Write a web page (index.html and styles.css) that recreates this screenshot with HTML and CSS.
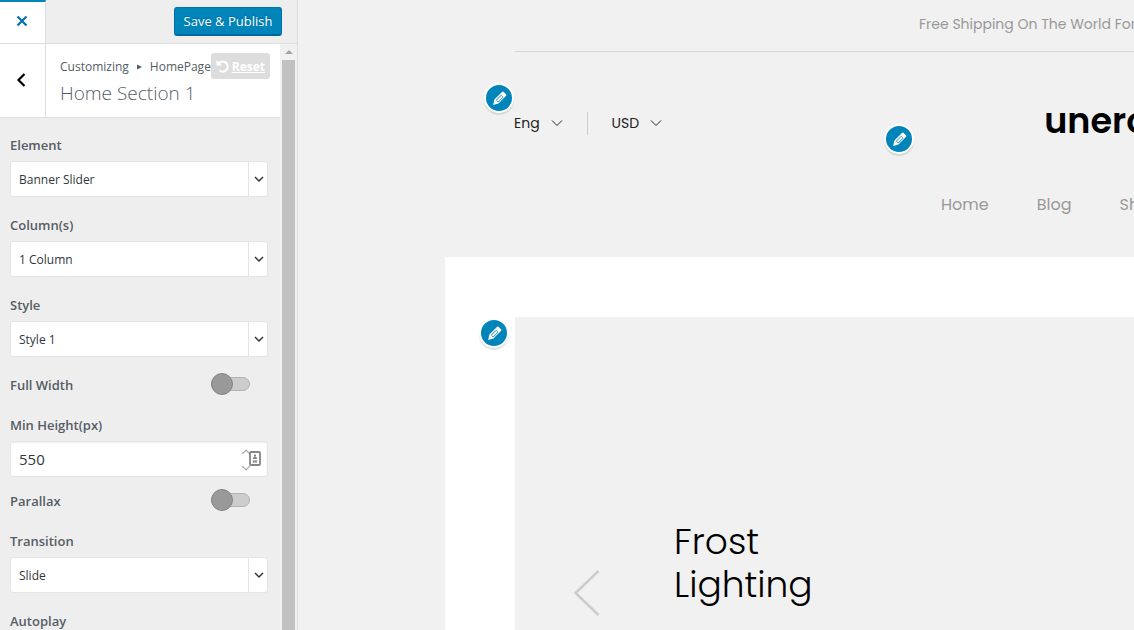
FILE: index.html
```html
<!DOCTYPE html>
<html lang="en">
<head>
<meta charset="utf-8">
<title>Customize: Home Section 1</title>
<link rel="stylesheet" href="styles.css">
</head>
<body>
<svg class="symbols" aria-hidden="true">
  <symbol id="chevron" viewBox="0 0 12 12"><path d="M2 4l4 4 4-4" fill="none" stroke="currentColor" stroke-width="1.5"/></symbol>
  <symbol id="thin-chevron" viewBox="0 0 12 12"><path d="M1 3.500l5 5 5-5" fill="none" stroke="currentColor" stroke-width="1"/></symbol>
  <symbol id="pencil" viewBox="0 0 20 20"><path d="M2.500 17.500L4 11.300L13.200 2.100Q14 1.500 14.700 2.200L17.800 5.300Q18.400 6 17.800 6.700L8.700 16Z" fill="currentColor"/><path d="M6.200 12L12 6.200M8.400 14.200L14.200 8.400" stroke="#0085ba" stroke-width="1.100" fill="none"/><path d="M6.200 12l2.200 2.200" stroke="#0085ba" stroke-width=".8"/><path d="M12 6.200l2.200 2.200" stroke="#0085ba" stroke-width=".8"/></symbol>
</svg>
<aside class="sidebar">
  <header class="topbar">
    <button class="close" aria-label="Close"><svg viewBox="0 0 12 12"><path d="M1.500 1.500l9 9M10.500 1.500l-9 9" stroke="currentColor" stroke-width="2.200"/></svg></button>
    <button class="save">Save &amp; Publish</button>
  </header>
  <div class="scroller">
    <div class="panel">
      <div class="section-head">
        <button class="back" aria-label="Back"><svg viewBox="0 0 10 14"><path d="M8.500 1L2.500 7l6 6" fill="none" stroke="currentColor" stroke-width="2.200"/></svg></button>
        <div class="section-title">
          <div class="crumbs"><span>Customizing</span><svg viewBox="0 0 5 6"><path d="M0 0.500L5 3 0 5.500z" fill="currentColor"/></svg><span>HomePage</span></div>
          <h1>Home Section 1</h1>
          <a class="reset" href="#"><svg viewBox="0 0 13 13"><path d="M3 3.200A5 5 0 1 1 3.500 10.500" fill="none" stroke="currentColor" stroke-width="2.200"/><path d="M.5 0v5.500H6z" fill="currentColor"/></svg>Reset</a>
        </div>
      </div>
      <form class="controls">
        <div class="field">
          <label for="element">Element</label>
          <div class="select"><select id="element"><option>Banner Slider</option></select><svg><use href="#chevron"/></svg></div>
        </div>
        <div class="field">
          <label for="columns">Column(s)</label>
          <div class="select"><select id="columns"><option>1 Column</option></select><svg><use href="#chevron"/></svg></div>
        </div>
        <div class="field">
          <label for="style">Style</label>
          <div class="select"><select id="style"><option>Style 1</option></select><svg><use href="#chevron"/></svg></div>
        </div>
        <div class="toggle-row"><label for="full">Full Width</label><input class="toggle" id="full" type="checkbox"></div>
        <div class="field number-field">
          <label for="height">Min Height(px)</label>
          <div class="number"><input id="height" type="number" value="550">
            <svg viewBox="0 0 22 24"><path d="M2 6l4-4 4 4M2 18l4 4 4-4" fill="none" stroke="#aaa" stroke-width="1.200"/><rect x="10" y="4" width="10" height="13" rx="1" fill="#fff" stroke="#858585" stroke-width="1.800"/><path d="M15 6.500v2" stroke="#858585" stroke-width="2"/><path d="M12.800 11a2.200 2.500 0 0 1 4.400 0z" fill="#858585"/><path d="M12.800 13.500h4.400" stroke="#999" stroke-width="2.500"/></svg>
          </div>
        </div>
        <div class="toggle-row"><label for="parallax">Parallax</label><input class="toggle" id="parallax" type="checkbox"></div>
        <div class="field">
          <label for="transition">Transition</label>
          <div class="select"><select id="transition"><option>Slide</option></select><svg><use href="#chevron"/></svg></div>
        </div>
        <div class="field">
          <label for="autoplay">Autoplay</label>
          <div class="number"><input id="autoplay" type="number"></div>
        </div>
      </form>
    </div>
    <div class="scrollbar"><svg viewBox="0 0 8 4"><path d="M0 4l4-4 4 4z" fill="#a3a3a3"/></svg><div class="thumb"></div></div>
  </div>
</aside>
<main class="preview">
  <div class="promo">Free Shipping On The World For</div>
  <header class="site-header">
    <div class="brand-row">
      <button class="menu">Eng<svg><use href="#thin-chevron"/></svg></button>
      <span class="divider"></span>
      <button class="menu">USD<svg><use href="#thin-chevron"/></svg></button>
      <a class="logo" href="#">unero</a>
    </div>
    <nav class="site-nav"><a href="#">Home</a><a href="#">Blog</a><a href="#">Shop</a></nav>
  </header>
  <section class="content">
    <div class="banner">
      <button class="prev" aria-label="Previous"><svg viewBox="0 0 26 46"><path d="M24.500 1L1.500 23l23 22" fill="none" stroke="currentColor" stroke-width="2.500"/></svg></button>
      <h2>Frost<br>Lighting</h2>
    </div>
  </section>
  <button class="edit edit-menus" aria-label="Edit language menu"><svg><use href="#pencil"/></svg></button>
  <button class="edit edit-nav" aria-label="Edit navigation"><svg><use href="#pencil"/></svg></button>
  <button class="edit edit-banner" aria-label="Edit banner"><svg><use href="#pencil"/></svg></button>
</main>
</body>
</html>
```

FILE: styles.css
```css
*, *::before, *::after { box-sizing: border-box; }
body {
  margin: 0;
  height: 100vh;
  display: flex;
  overflow: hidden;
  background: #f1f1f1;
  font-family: "Segoe UI", "Open Sans", sans-serif;
}
button { border: 0; padding: 0; background: none; font: inherit; cursor: pointer; }
svg { display: block; flex: none; }
a { color: inherit; text-decoration: none; }
.symbols { position: absolute; width: 0; height: 0; }

.sidebar {
  width: 298px;
  flex: none;
  display: flex;
  flex-direction: column;
  background: #eee;
  border-right: 1px solid #ddd;
  color: #555d66;
}
.topbar {
  flex: none;
  height: 44px;
  display: flex;
  justify-content: space-between;
  align-items: center;
  padding-right: 15px;
  border-bottom: 1px solid #ddd;
}
.close {
  width: 46px;
  align-self: stretch;
  display: grid;
  place-items: center;
  padding: 0 2px 3px 0;
  background: #fff;
  border-top: 2px solid #0085ba;
  border-right: 1px solid #ddd;
  color: #0073aa;
}
.close svg { width: 12px; height: 12px; }
.save {
  width: 108px;
  height: 29px;
  border: 1px solid #0073aa;
  border-bottom: 2px solid #006799;
  border-radius: 3px;
  background: #0085ba;
  color: #fff;
  font-size: 13px;
  line-height: 24px;
  white-space: nowrap;
  text-shadow: 0 -1px 1px #006799;
}
.scroller { flex: 1; min-height: 0; display: flex; }
.panel { flex: 1; overflow: hidden; }
.scrollbar {
  width: 17px;
  display: flex;
  flex-direction: column;
  align-items: center;
  background: #f1f1f1;
}
.scrollbar svg { width: 8px; height: 4px; margin: 6px 0; }
.thumb { width: 13px; flex: 1; background: #c1c1c1; }

.section-head {
  display: flex;
  height: 74px;
  background: #fff;
  border-bottom: 1px solid #ddd;
}
.back {
  width: 46px;
  display: grid;
  place-items: center;
  padding: 0 4px 2px 0;
  border-right: 1px solid #ddd;
  color: #000;
}
.back svg { width: 10px; height: 14px; }
.section-title { flex: 1; position: relative; padding: 13px 14px; }
.crumbs { display: flex; align-items: center; font-size: 12px; line-height: 20px; }
.crumbs svg { width: 5px; height: 6px; margin: 0 8px; }
h1 { margin: 3px 0 0; font-size: 19px; line-height: 26px; font-weight: 300; }
.reset {
  position: absolute;
  top: 9px;
  right: 10px;
  height: 26px;
  display: flex;
  align-items: center;
  gap: 3px;
  padding: 0 5px;
  border-radius: 3px;
  background: #ddd;
  color: #fff;
  font-size: 12px;
  font-weight: 700;
  text-decoration: underline;
}
.reset svg { width: 13px; height: 13px; }

.controls { padding: 17px 12px 0 10px; }
.controls label { display: block; font-size: 13px; line-height: 20px; font-weight: 600; }
.field { margin-bottom: 18px; }
.number-field { margin-bottom: 14px; }
.select, .number { position: relative; margin-top: 6px; }
.select select, .number input {
  display: block;
  width: 100%;
  height: 36px;
  border: 1px solid #e5e5e5;
  border-radius: 3px;
  background: #fff;
  color: #32373c;
  font-family: inherit;
  font-size: 12px;
  padding: 0 8px;
  appearance: none;
}
.select::after {
  content: "";
  position: absolute;
  top: 1px;
  bottom: 1px;
  right: 19px;
  border-left: 1px solid #e5e5e5;
}
.select svg {
  position: absolute;
  right: 3px;
  top: 12px;
  width: 12px;
  height: 12px;
  color: #32373c;
  pointer-events: none;
}
.number input { font-size: 15px; appearance: textfield; box-shadow: inset 0 1px 2px rgba(0, 0, 0, .07); }
.number input::-webkit-inner-spin-button { appearance: none; }
.number svg { position: absolute; right: 6px; top: 7px; width: 22px; height: 24px; }
.toggle-row {
  display: flex;
  justify-content: space-between;
  align-items: center;
  height: 20px;
  margin-bottom: 20px;
  padding-right: 18px;
}
.toggle {
  appearance: none;
  display: flex;
  align-items: center;
  width: 39px;
  height: 14px;
  margin: 0 0 2px;
  border: 1px solid #b4b4b4;
  border-radius: 7px;
  background: #ccc;
}
.toggle::before {
  content: "";
  flex: none;
  width: 22px;
  height: 22px;
  margin-left: -1px;
  border: 1px solid #858585;
  border-radius: 50%;
  background: #999;
}

.preview {
  flex: 1;
  min-width: 0;
  position: relative;
  overflow: hidden;
  font-family: Poppins, Inter, sans-serif;
  white-space: nowrap;
}
.promo {
  height: 52px;
  margin-left: 217px;
  padding-left: 404px;
  border-bottom: 1px solid #d5d5d5;
  color: #999;
  font-size: 14px;
  line-height: 48px;
}
.site-header { height: 205px; padding: 48px 0 0 216px; }
.brand-row { display: flex; align-items: center; height: 46px; }
.menu { flex: none; display: flex; align-items: center; gap: 11px; font-size: 14px; color: #222; }
.menu svg { width: 12px; height: 12px; }
.divider { flex: none; width: 1px; height: 23px; margin: 0 24px; background: #ccc; }
.logo { margin: 0 0 4px 382px; color: #000; font-size: 35px; line-height: 40px; font-weight: 600; }
.site-nav {
  display: flex;
  gap: 48px;
  padding: 47px 0 0 427px;
  color: #999;
  font-size: 16px;
  line-height: 24px;
}
.content { margin-left: 147px; padding: 60px 0 0 70px; background: #fff; }
.banner {
  min-height: 552px;
  display: flex;
  align-items: center;
  gap: 74px;
  padding-left: 59px;
  background: #f1f1f1;
}
.prev { color: #ccc; }
.prev svg { width: 26px; height: 46px; }
.banner h2 {
  align-self: flex-start;
  margin: 203px 0 0;
  color: #000;
  font-size: 36px;
  line-height: 43px;
  font-weight: 300;
}
.edit {
  position: absolute;
  width: 30px;
  height: 30px;
  display: grid;
  place-items: center;
  border: 2px solid #fff;
  border-radius: 50%;
  background: #0085ba;
  color: #fff;
  box-shadow: 0 2px 1px rgba(46, 68, 83, .15);
}
.edit svg { width: 17px; height: 17px; }
.edit-menus { left: 186px; top: 83px; }
.edit-nav { left: 586px; top: 124px; }
.edit-banner { left: 181px; top: 318px; }
```
